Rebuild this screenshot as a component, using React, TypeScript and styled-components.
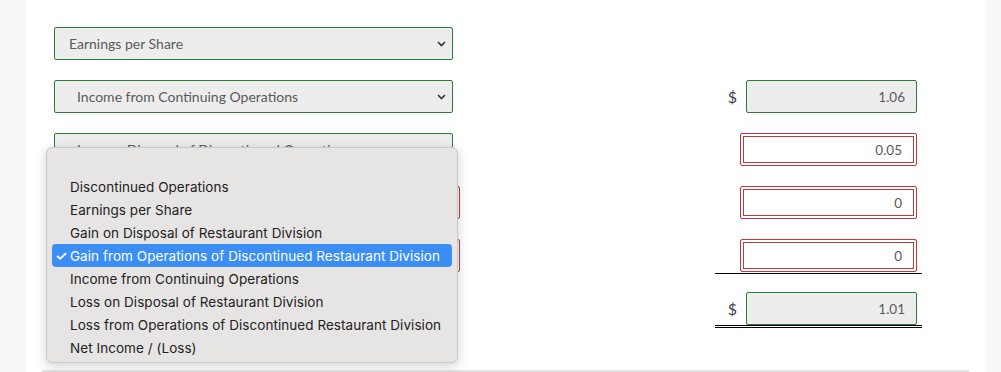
import styled, { createGlobalStyle } from 'styled-components';

const GlobalStyle = createGlobalStyle`
    body {
        margin: 0;
        background: #f8f8f8;
        font-family: Lato, "Liberation Sans", sans-serif;
    }
`;

const Page = styled.div`
    width: 960px;
    height: 372px;
    margin-left: 26px;
    background: #ffffff;
    position: relative;
    overflow: hidden;
`;

const Card = styled.div`
    width: 927px;
    height: 372px;
    margin-left: 16px;
    padding: 27px 0 0 12px;
    box-sizing: border-box;
    border-bottom: 2px solid #e2e2e2;
`;

const Rows = styled.div`
    display: grid;
    grid-template-columns: 406px 255px 207px;
    grid-auto-rows: 33px;
    row-gap: 20px;
`;

const SelectBox = styled.div<{ $bad?: boolean; $indent?: boolean }>`
    width: ${p => (p.$bad ? '406px' : '399px')};
    height: 33px;
    box-sizing: border-box;
    display: flex;
    align-items: center;
    justify-content: space-between;
    padding: 0 6px 0 ${p => (p.$indent ? '22px' : '14px')};
    background: ${p => (p.$bad ? '#ffffff' : '#ededed')};
    border: 1px solid ${p => (p.$bad ? '#c0393b' : '#2a7d34')};
    box-shadow: ${p => (p.$bad ? 'inset 0 0 0 2px #fff, inset 0 0 0 3px #c0393b' : 'none')};
    border-radius: 2px;
    font-size: 14px;
    color: #5a5a5a;
    white-space: nowrap;
`;

const AmountCell = styled.div<{ $rule?: 'single' | 'double' }>`
    grid-column: 3;
    height: ${p => (p.$rule === 'double' ? '36px' : p.$rule === 'single' ? '35px' : '33px')};
    box-sizing: border-box;
    display: flex;
    justify-content: flex-end;
    align-items: flex-start;
    padding-right: 5px;
    border-bottom: ${p => (p.$rule === 'double' ? '3px double #000' : p.$rule === 'single' ? '1px solid #000' : 'none')};
`;

const Dollar = styled.span`
    font-size: 16px;
    line-height: 33px;
    color: #3a4450;
    margin-right: 9px;
`;

const Amount = styled.div<{ $bad?: boolean }>`
    width: ${p => (p.$bad ? '177px' : '171px')};
    height: 33px;
    box-sizing: border-box;
    display: flex;
    align-items: center;
    justify-content: flex-end;
    padding-right: ${p => (p.$bad ? '14px' : '11px')};
    background: ${p => (p.$bad ? '#ffffff' : '#ededed')};
    border: 1px solid ${p => (p.$bad ? '#c0393b' : '#2a7d34')};
    box-shadow: ${p => (p.$bad ? 'inset 0 0 0 2px #fff, inset 0 0 0 3px #c0393b' : 'none')};
    border-radius: 2px;
    font-size: 13.5px;
    color: #5a5a5a;
`;

const Menu = styled.div`
    position: absolute;
    left: 20px;
    top: 147px;
    width: 412px;
    height: 216px;
    box-sizing: border-box;
    padding: 4px 5px 4px;
    background: #e7e5e4;
    border: 1px solid #cbc9c8;
    border-radius: 6px;
    box-shadow: 0 3px 12px rgba(0, 0, 0, 0.18);
    font-family: Inter, "Noto Sans", sans-serif;
    font-size: 13.5px;
`;

const Option = styled.div<{ $active?: boolean }>`
    height: 23px;
    display: flex;
    align-items: center;
    padding-left: 18px;
    position: relative;
    border-radius: 4px;
    color: ${p => (p.$active ? '#ffffff' : '#222222')};
    background: ${p => (p.$active ? '#3b8ef6' : 'transparent')};
    white-space: nowrap;
    letter-spacing: 0.05px;
`;

const Check = styled.span`
    position: absolute;
    left: 3px;
    font-size: 14px;
    font-weight: 600;
`;

const Chevron = () => (
    <svg width="9" height="6" viewBox="0 0 9 6">
        <path d="M1 1l3.5 3.5L8 1" fill="none" stroke="#333" strokeWidth="1.6" />
    </svg>
);

const options = [
    '',
    'Discontinued Operations',
    'Earnings per Share',
    'Gain on Disposal of Restaurant Division',
    'Gain from Operations of Discontinued Restaurant Division',
    'Income from Continuing Operations',
    'Loss on Disposal of Restaurant Division',
    'Loss from Operations of Discontinued Restaurant Division',
    'Net Income / (Loss)',
];

const App = () => {
    return (
        <>
            <GlobalStyle />
            <Page>
                <Card>
                    <Rows>
                        <SelectBox><span>Earnings per Share</span><Chevron /></SelectBox>
                        <div />
                        <div />

                        <SelectBox $indent><span>Income from Continuing Operations</span><Chevron /></SelectBox>
                        <AmountCell><Dollar>$</Dollar><Amount>1.06</Amount></AmountCell>

                        <SelectBox $indent><span>Loss on Disposal of Discontinued Operations</span><Chevron /></SelectBox>
                        <AmountCell><Amount $bad>0.05</Amount></AmountCell>

                        <SelectBox $bad $indent><span></span><Chevron /></SelectBox>
                        <AmountCell><Amount $bad>0</Amount></AmountCell>

                        <SelectBox $bad $indent><span></span><Chevron /></SelectBox>
                        <AmountCell $rule="single"><Amount $bad>0</Amount></AmountCell>

                        <SelectBox $indent><span></span><Chevron /></SelectBox>
                        <AmountCell $rule="double"><Dollar>$</Dollar><Amount>1.01</Amount></AmountCell>
                    </Rows>
                </Card>
                <Menu>
                    {options.map((o, i) => (
                        <Option key={i} $active={i === 4}>
                            {i === 4 && <Check>✓</Check>}
                            {o}
                        </Option>
                    ))}
                </Menu>
            </Page>
        </>
    );
};

export default App;
